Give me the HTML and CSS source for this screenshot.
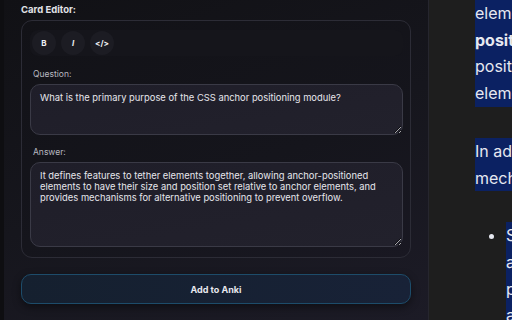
FILE: index.html
```html
<!DOCTYPE html>
<html lang="en">
<head>
    <meta charset="UTF-8">
    <meta name="viewport" content="width=device-width, initial-scale=1.0">
    <title>Card Editor</title>
    <link rel="stylesheet" href="styles.css">
</head>
<body>
    <aside class="editor">
        <div class="section-title">Card Editor:</div>
        <div class="card">
            <div class="toolbar">
                <button class="tool bold">B</button>
                <button class="tool italic">I</button>
                <button class="tool code">&lt;/&gt;</button>
            </div>
            <label class="field-label" for="question">Question:</label>
            <textarea id="question" class="question">What is the primary purpose of the CSS anchor positioning module?</textarea>
            <label class="field-label answer-label" for="answer">Answer:</label>
            <textarea id="answer" class="answer">It defines features to tether elements together, allowing anchor-positioned elements to have their size and position set relative to anchor elements, and provides mechanisms for alternative positioning to prevent overflow.</textarea>
        </div>
        <button class="add-button">Add to Anki</button>
        <div class="section-title">Card Type:</div>
    </aside>

    <main class="reader">
        <p class="selected">elements to one another, called<br><strong>positioned</strong> elements, and their<br>positioning relative to anchor<br>elements.</p>
        <p class="selected">In addition, the module provides<br>mechanisms for alternatives.</p>
        <ul>
            <li class="selected">Setting the size and<br>anchor of elements<br>position-try fallback<br>alternative options</li>
        </ul>
    </main>
</body>
</html>
```

FILE: styles.css
```css
* {
    box-sizing: border-box;
}

body {
    display: flex;
    margin: 0;
    height: 320px;
    overflow: hidden;
    font-family: Inter, "Noto Sans", sans-serif;
    background-color: #1e1e1e;
}

.editor {
    width: 429px;
    flex-shrink: 0;
    padding: 3px 17px 0 17px;
    border-left: 4px solid #0e0e11;
    border-right: 1px solid #26262e;
    background: linear-gradient(160deg, #111115 0%, #16161d 50%, #1c1b26 100%);
    color: #e4e4e8;
}

.section-title {
    font-size: 9.5px;
    font-weight: 700;
    line-height: 13px;
    color: #e2e2e6;
}

.card {
    display: flex;
    flex-direction: column;
    margin-top: 4px;
    padding: 9px 7px 10px 8px;
    border: 1px solid #2c2c36;
    border-radius: 11px;
    background: linear-gradient(160deg, #121217 0%, #15151c 60%, #191822 100%);
}

.toolbar {
    display: flex;
    gap: 5px;
    padding: 1px 2px;
    border-radius: 8px;
    background-color: #15151b;
}

.tool {
    width: 24px;
    height: 24px;
    padding: 0;
    border: none;
    border-radius: 50%;
    background-color: #1c1c23;
    color: #f0f0f4;
    font-family: Inter, sans-serif;
    font-size: 8px;
    font-weight: 700;
    cursor: pointer;
}

.tool.italic {
    font-style: italic;
}

.field-label {
    margin: 12px 0 4px 3px;
    font-size: 8.5px;
    line-height: 12px;
    color: #b8b8c0;
}

.answer-label {
    margin-top: 11px;
}

textarea {
    padding: 7px 20px 7px 9px;
    border: 1px solid #3a3a46;
    border-radius: 10px;
    background: linear-gradient(170deg, #1f1e29 0%, #22212c 100%);
    color: #e6e6ec;
    font-family: Inter, sans-serif;
    font-size: 9.4px;
    line-height: 11px;
    resize: vertical;
}

.question {
    height: 51px;
}

.answer {
    height: 85px;
}

.add-button {
    display: block;
    width: 100%;
    height: 30px;
    margin: 16px 0 13px;
    border: 1px solid #1d4c6a;
    border-radius: 10px;
    background: linear-gradient(90deg, #15202f 0%, #182237 100%);
    color: #e8e8ee;
    font-family: Inter, sans-serif;
    font-size: 9px;
    font-weight: 700;
    box-shadow: 0 3px 8px rgba(0, 0, 0, 0.45);
    cursor: pointer;
}

.reader {
    flex: 1;
    padding-left: 46px;
    color: #e6e8f0;
    font-family: Inter, "Noto Sans", sans-serif;
    font-size: 16px;
    line-height: 26.7px;
    white-space: nowrap;
    overflow: hidden;
}

.reader p {
    margin: 0 0 31px;
}

.selected {
    background-color: #0b2162;
}

.reader ul {
    margin: 0;
    padding-left: 31px;
}
```
